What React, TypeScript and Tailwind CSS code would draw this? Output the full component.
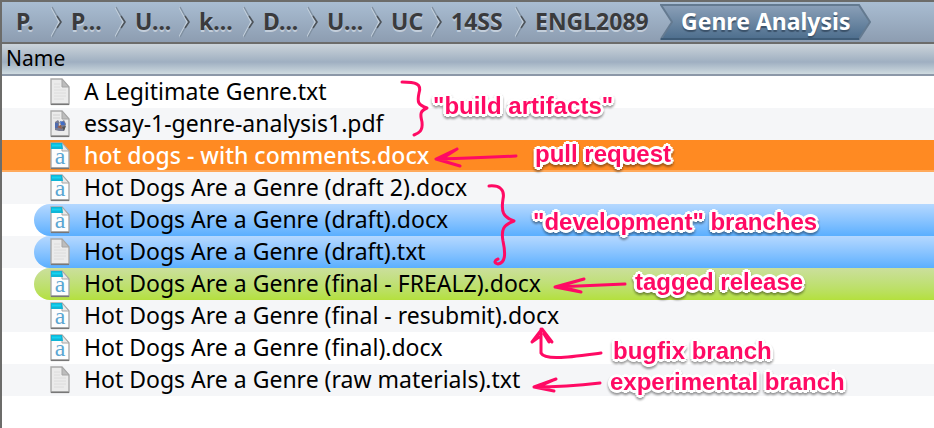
import type { ReactNode } from "react";

type FileKind = "text" | "pdf" | "word";
type Tone = "plain" | "orange" | "blue" | "green";

const crumbs = [
  { label: "P.", width: "w-[61px] pl-[14px]" },
  { label: "P...", width: "w-16 pl-2" },
  { label: "U...", width: "w-16 pl-2" },
  { label: "k...", width: "w-16 pl-2" },
  { label: "D...", width: "w-16 pl-2" },
  { label: "U...", width: "w-16 pl-2" },
  { label: "UC", width: "w-[60px] pl-2" },
  { label: "14SS", width: "w-[84px] pl-2" },
  { label: "ENGL2089", width: "w-[133px] pl-2" },
];

const files: { name: string; kind: FileKind; tone: Tone }[] = [
  { name: "A Legitimate Genre.txt", kind: "text", tone: "plain" },
  { name: "essay-1-genre-analysis1.pdf", kind: "pdf", tone: "plain" },
  { name: "hot dogs - with comments.docx", kind: "word", tone: "orange" },
  { name: "Hot Dogs Are a Genre (draft 2).docx", kind: "word", tone: "plain" },
  { name: "Hot Dogs Are a Genre (draft).docx", kind: "word", tone: "blue" },
  { name: "Hot Dogs Are a Genre (draft).txt", kind: "text", tone: "blue" },
  { name: "Hot Dogs Are a Genre (final - FREALZ).docx", kind: "word", tone: "green" },
  { name: "Hot Dogs Are a Genre (final - resubmit).docx", kind: "word", tone: "plain" },
  { name: "Hot Dogs Are a Genre (final).docx", kind: "word", tone: "plain" },
  { name: "Hot Dogs Are a Genre (raw materials).txt", kind: "text", tone: "plain" },
];

const tones: Record<Tone, string> = {
  plain: "pl-12",
  orange: "bg-linear-to-b from-[#ff8a22] from-94% to-[#ffaa5c] to-94% pl-12 font-medium text-white",
  blue: "ml-8 rounded-l-full bg-linear-to-b from-[#b5d8ff] to-[#5aafff] pl-4",
  green: "ml-8 rounded-l-full bg-linear-to-b from-[#cbdf9c] to-[#b4e03c] pl-4",
};

function FileIcon({ kind }: { kind: FileKind }) {
  return (
    <svg width="20" height="28" viewBox="0 0 20 28" aria-hidden="true" className="shrink-0">
      <path d="M1 1H12L19 9V26H1Z" fill={kind === "word" ? "#fdfdfd" : "#ebebeb"} stroke="#aaa" strokeWidth="1.4" />
      <path d="M1 26.4H19" stroke="#777" strokeWidth="1.4" />
      <path d="M12 1V9H19Z" fill={kind === "word" ? "#e8e8e8" : "#bdbdbd"} stroke="#a5a5a5" />
      {kind === "text" && (
        <path d="M4 6H10M4 9H10M4 12H16M4 15H16M4 18H16M4 21H14" stroke="#dcdcdc" />
      )}
      {kind === "pdf" && (
        <g>
          <path d="M3 5H10M3 8H10" stroke="#d0d0d0" />
          <path d="M5 12L8 10L10 13L14 10L16 14L14 21H9L5 20Z" fill="#777b91" />
          <path d="M5 13H8V18H5Z" fill="#4f6cb0" />
          <path d="M10 11L14 12L15 15H11Z" fill="#426dc6" />
          <path d="M7 17L11 15L12 19Z" fill="#9b5e48" />
          <path d="M9 13L11 14L9 16Z" fill="#e1d7d0" />
          <path d="M12 17L16 16L14 21Z" fill="#555" />
        </g>
      )}
      {kind === "word" && (
        <g>
          <path d="M1 1H12L13 7H1Z" fill="#10b5d6" />
          <path d="M2 3.5H11" stroke="#13d3f2" strokeWidth="2" />
          <text x="10" y="22" textAnchor="middle" fontFamily="Liberation Serif, serif" fontSize="24" fill="#5ba6d2">
            a
          </text>
        </g>
      )}
    </svg>
  );
}

function Chevron() {
  return (
    <svg width="12" height="32" viewBox="0 0 12 32" fill="none" aria-hidden="true" className="shrink-0">
      <path d="M0 1L8 16L0 31" stroke="#c4d0dc" strokeWidth="1.4" />
      <path d="M1 1L6 10" stroke="#7f8fa0" strokeWidth="1.4" />
      <path d="M6 10L10 16L6 22" stroke="#4d5359" strokeWidth="1.6" />
      <path d="M6 22L1 31" stroke="#7f8fa0" strokeWidth="1.4" />
    </svg>
  );
}

function Note({ place, children }: { place: string; children: ReactNode }) {
  return (
    <span
      className={`${place} absolute font-['Liberation_Sans',Arial,sans-serif] text-2xl leading-7 font-bold whitespace-nowrap text-[#ff0a64] drop-shadow-[0_2px_1px_#00000066] [text-shadow:3px_0_white,-3px_0_white,0_3px_white,0_-3px_white,2px_2px_white,-2px_2px_white,2px_-2px_white,-2px_-2px_white]`}
    >
      {children}
    </span>
  );
}

export default function App() {
  return (
    <main className="relative min-h-screen overflow-hidden border-t-2 border-l-2 border-[#6c6c6a] bg-white font-['Noto_Sans','Open_Sans',sans-serif] text-[23px] leading-7 text-black">
      <nav aria-label="Path" className="h-[42px] border-b-2 border-[#6c6c6a] bg-linear-to-b from-[#a9bdd2] to-[#8d9db1]">
        <ol className="flex h-full items-center font-bold text-[#3a3b3d]">
          {crumbs.map((crumb, i) => (
            <li key={i} className={`${crumb.width} flex shrink-0 items-center justify-between`}>
              <a href="#" className="pb-0.5 whitespace-nowrap [text-shadow:0_2px_0_#c3cedb]">
                {crumb.label}
              </a>
              {i < crumbs.length - 1 && <Chevron />}
            </li>
          ))}
          <li className="grid h-9 w-[212px] shrink-0 items-center">
            <svg width="212" height="36" viewBox="0 0 212 36" aria-hidden="true" className="col-start-1 row-start-1">
              <defs>
                <linearGradient id="current" x1="0" y1="0" x2="0" y2="1">
                  <stop offset="0" stopColor="#8ba0b8" />
                  <stop offset="1" stopColor="#4d6e8d" />
                </linearGradient>
              </defs>
              <path d="M1 1H199L210 18L199 35H1L12 18Z" fill="url(#current)" stroke="#647a90" strokeWidth="2" />
              <path d="M1 35H199" stroke="#3e5b76" strokeWidth="2" />
            </svg>
            <a
              href="#"
              aria-current="page"
              className="col-start-1 row-start-1 pb-0.5 pl-[21px] whitespace-nowrap text-white [text-shadow:0_2px_1px_#3b526a]"
            >
              Genre Analysis
            </a>
          </li>
        </ol>
      </nav>

      <table className="w-full border-separate border-spacing-0 text-left">
        <thead>
          <tr>
            <th scope="col" className="h-8 border-b-2 border-[#8c98a8] bg-linear-to-b from-[#ccd4da] via-[#9fafc1] via-60% to-[#cfdbe0] p-0 pl-1 text-[21px] leading-7 font-normal">
              <div className="pb-0.5">Name</div>
            </th>
          </tr>
        </thead>
        <tbody>
          {files.map((file) => (
            <tr key={file.name} className="even:bg-[#f5f6f8]">
              <td className="p-0">
                <div className={`${tones[file.tone]} flex h-8 items-center gap-3.5 whitespace-nowrap`}>
                  <FileIcon kind={file.kind} />
                  <span className="pb-0.5">{file.name}</span>
                </div>
              </td>
            </tr>
          ))}
        </tbody>
      </table>

      <svg
        width="934"
        height="428"
        viewBox="2 2 934 428"
        fill="none"
        stroke="#ff0a64"
        strokeWidth="3"
        strokeLinecap="round"
        strokeLinejoin="round"
        aria-hidden="true"
        className="pointer-events-none absolute top-0 left-0"
      >
        <path d="M402 82C416 82 422 84 419 93C417 102 418 105 427 108C420 111 420 114 422 122C423 131 419 133 414 135" />
        <path d="M436 159Q480 158 516 156M457 149L436 159L460 166M457 149L443 158" />
        <path d="M489 186C500 185 505 190 503 199C501 212 503 217 514 221C503 225 501 230 503 241C506 255 505 263 498 264C493 263 495 260 498 259" />
        <path d="M555 287L625 284M584 279L555 287L581 292M584 279L563 285M581 292L562 287" />
        <path d="M601 353C570 357 545 361 541 353V329M532 342L542 329L552 342M532 342L539 337M549 342L544 334" />
        <path d="M534 387Q566 387 600 383M556 379L534 387L554 391M556 379L540 386" />
      </svg>

      <Note place="top-[90px] left-[431px]">"build artifacts"</Note>
      <Note place="top-[138px] left-[533px]">pull request</Note>
      <Note place="top-[206px] left-[531px]">"development" branches</Note>
      <Note place="top-[266px] left-[633px]">tagged release</Note>
      <Note place="top-[335px] left-[611px]">bugfix branch</Note>
      <Note place="top-[366px] left-[608px]">experimental branch</Note>
    </main>
  );
}
